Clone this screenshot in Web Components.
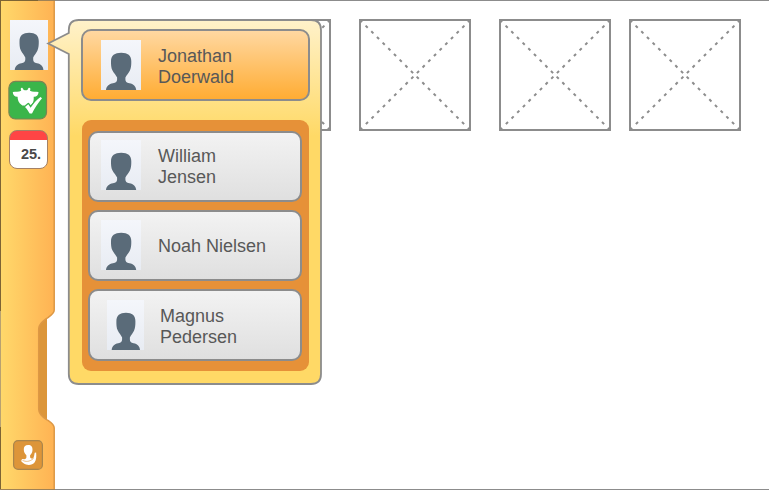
<!DOCTYPE html>
<html lang="en">
<head>
<meta charset="utf-8">
<title>Profile selector</title>
<style>
html,body{margin:0;height:100%;overflow:hidden;background:#fff;font-family:"Liberation Sans",Arial,sans-serif}
</style>
</head>
<body>
<week-app></week-app>
<script>
function define(name, html) {
  const t = document.createElement('template');
  t.innerHTML = html;
  customElements.define(name, class extends HTMLElement {
    constructor() {
      super();
      this.attachShadow({ mode: 'open' }).append(t.content.cloneNode(true));
    }
  });
}

define('person-portrait', `
<style>
:host{display:block;width:40px;height:50px;flex:none;background:linear-gradient(#f4f6fb,#e8ecf3)}
svg{display:block;width:100%;height:100%}
</style>
<svg viewBox="0 0 40 50" preserveAspectRatio="none"><path fill="#5a6b79" d="M5 50C5.200 46.500 8 43.800 12 43.200C15 42.700 16.100 41.500 16.100 39.500V37.500C14.800 34.800 13 33.500 11.500 30.500C10 28 10 24.500 10 21.300C10 15.500 13.700 12.800 20.200 12.800C26.800 12.800 30.300 15.600 30.300 21.300C30.300 25 30.200 28 28.800 30.800C27.500 33.500 25.600 34.900 24.400 37.500V39.500C24.400 41.500 25.400 42.700 28.400 43.200C32.400 43.800 35 46.300 35.200 50Z"/></svg>`);

define('person-card', `
<style>
:host{box-sizing:border-box;display:flex;height:71px;border:2px solid #8c8c8c;border-radius:10px;
 background:linear-gradient(#f3f3f3,#dfdfdf);background-origin:border-box;color:#585858;font-size:18px;line-height:21px;padding:7px 0 0 11px}
:host([selected]){background-image:linear-gradient(#ffd9a4,#ffab30);height:72px;padding:9px 0 0 18px}
:host([single]){padding-top:8px}
:host([narrow]){height:72px;padding:9px 0 0 16.5px}
:host([narrow]) person-portrait{width:37.500px}
.name{width:115px;margin-left:17px;padding-top:6px}
:host([single]) .name{padding-top:16px}
:host([narrow]) .name{margin-left:16px}
</style>
<person-portrait></person-portrait><div class="name"><slot></slot></div>`);

define('person-list', `
<style>
:host{box-sizing:border-box;display:flex;flex-direction:column;gap:8px;width:227px;height:251px;margin:19px 0 0 1px;padding:11px 7px 0 6px;border-radius:9px;background:#e69138}
</style><slot></slot>`);

define('profile-popover', `
<style>
:host{position:absolute;left:48px;top:19px;display:block;box-sizing:border-box;width:274px;height:366px}
.shape{position:absolute;inset:0;overflow:visible}
.body{position:relative;padding:10px 12px 0 33px;width:229px}
::slotted(person-card){width:229px}
</style>
<svg class="shape" width="274" height="366" viewBox="0 0 274 366">
<defs><linearGradient id="g" gradientUnits="userSpaceOnUse" x1="0" y1="0" x2="0" y2="366"><stop offset="0" stop-color="#fff2cb"/><stop offset=".32" stop-color="#ffd966"/></linearGradient></defs>
<path d="M30.800 1H263Q273 1 273 11V355Q273 365 263 365H30.800Q20.800 365 20.800 355V35L.2 24.500L20.800 14V11Q20.800 1 30.800 1Z" fill="url(#g)" stroke="#8c8c8c" stroke-width="1.8"/></svg>
<div class="body"><slot></slot></div>`);

define('crossed-box', `
<style>
:host{display:block;width:112px;height:112px;flex:none}svg{display:block}
</style>
<svg width="112" height="112" viewBox="0 0 112 112" fill="none" stroke="#8c8c8c" stroke-width="2">
<rect x="1" y="1" width="110" height="110"/>
<path d="M2 3.2L3.2 2M108.800 2L110 3.200M2 108.800L3.200 110M108.800 110L110 108.800" stroke-width="1.500"/>
<path d="M6.600 6.600L105.600 105.600M105.400 6.600L6.400 105.600" stroke-dasharray="3 5.020"/></svg>`);

define('box-row', `
<style>
:host{display:flex;gap:28px;padding:19px 0 0 164px}
::slotted(:last-child){margin-left:-10px}
</style><slot></slot>`);

define('done-icon', `
<style>:host{display:block;width:40px;height:40px}svg{display:block}</style>
<svg width="40" height="40" viewBox="0 0 40 40"><rect x=".9" y="1.400" width="37.600" height="37.600" rx="6.500" fill="#3bb54a" stroke="#798552" stroke-width="1.200"/>
<path fill="#fff" d="M13.200 10.700C12 8.300 13.500 7.300 14.600 8.200C15.400 8.900 15.200 9.800 16 10.100C17 10.400 18.500 10.400 19.200 10.100C20 9.800 19.600 8.900 20.400 8.200C21.500 7.300 23.200 8.300 22 10.700C24.500 12 27.500 11.500 30.500 11.900C30.500 15 28.500 17 25.700 16.800C25.800 20 25.700 23 23.500 24.600C21 26.200 15.500 26.300 13.700 25C10.500 23 9.600 20 9.600 16.800C6.800 17 4.800 15 4.800 11.900C7.500 11.500 10.700 12 13.200 10.700Z"/>
<path fill="#fff" stroke="#3bb54a" stroke-width="2.600" paint-order="stroke" stroke-linejoin="round" d="M17 27L20.300 24.200L22.600 27.700C25.500 23.500 28.600 19.900 32.500 17L34 18.200C29.800 23.200 26.700 28.100 24 33.500L21.700 33.600C20.500 31.300 19 29 17 27Z"/></svg>`);

define('date-icon', `
<style>
:host{box-sizing:border-box;display:block;width:39px;height:39px;border:1px solid #a58165;border-radius:8px;background:linear-gradient(#ff4545 9px,#fff 9px);
 color:#494949;font:bold 14.500px/20px "Liberation Sans",Arial,sans-serif;text-align:center;padding:13px 0 0 5px}
</style><slot></slot>`);

define('user-icon', `
<style>:host{display:block;width:30px;height:30px}svg{display:block}</style>
<svg width="30" height="30" viewBox="0 0 30 30"><rect x=".6" y=".6" width="28.800" height="28.800" rx="4.500" fill="#dd9539" stroke="#a9854c" stroke-width="1.200"/>
<path fill="#fff" d="M15.200 4.900C18.400 4.900 19.500 6.800 19.500 9.200C19.500 12 18.700 13.600 17.100 15.300V17.200C17.500 18.600 19 18.700 20.300 18.300C21.200 16.500 21.300 14.500 21.700 12.800L23.100 12.600C23.500 16.500 23.400 19.800 21.700 22.200C19.800 24.800 16.600 25.300 13 24.600C10.500 23.900 9 22.200 7.700 20.600L9.300 20.200L8.500 19.100C10 19 11 19.400 12 19C13 18.600 13.400 18 13.400 17.200V15.300C11.800 13.600 10.800 12 10.800 9.200C10.800 6.800 12 4.900 15.200 4.900Z"/>
<path d="M9.500 20.200C12.500 22 16.500 22 20.500 18.500" fill="none" stroke="#dd9539" stroke-width=".6"/></svg>`);

define('side-bar', `
<style>
:host{position:relative;box-sizing:border-box;display:flex;flex-direction:column;width:55px;height:490px;flex:none;padding:20px 0 0}
.bg{position:absolute;inset:0}
::slotted(*){position:relative}
::slotted(person-portrait){width:38px;margin-left:10px}
::slotted(done-icon){margin:10px 0 0 8px}
::slotted(date-icon){margin:10px 0 0 9px}
::slotted(user-icon){margin:auto 0 20px 13px}
</style>
<svg class="bg" width="55" height="490" viewBox="0 0 55 490">
<defs><linearGradient id="s" gradientUnits="userSpaceOnUse" x1="0" y1="0" x2="55" y2="0"><stop stop-color="#ffd96b"/><stop offset="1" stop-color="#ffb253"/></linearGradient></defs>
<path fill="#dc963a" d="M36 318H47V419H36Z"/>
<path fill="url(#s)" d="M0 0H54.300V310C54.300 314 50 316 46.500 318.500C42 322 38.700 324.500 38.700 329V409C38.700 414 42.500 417 46.500 419.500C50 422 54.300 424 54.300 428V490H0Z"/>
<path fill="none" stroke="#dd9845" stroke-width="1.500" d="M54.200 0V310C54.200 314 50 316 46.500 318.500C42 322 38.700 324.500 38.700 329V409C38.700 414 42.500 417 46.500 419.500C50 422 54.200 424 54.200 428V490"/>
<path fill="#7d6434" d="M0 0H38V1H0ZM0 0H1V311H0ZM0 427H1V490H0Z"/>
<path fill="#b8a171" d="M0 311H1V427H0Z"/><path fill="#a08256" d="M38 0H55V1H38ZM0 489H55V490H0Z"/>
</svg><slot></slot>`);

define('week-app', `
<style>
:host{position:relative;display:flex;width:769px;height:490px;overflow:hidden}
main{flex:1;min-width:0;box-sizing:border-box;box-shadow:inset 0 1px #8c8c8c,inset 0 -1px #8c8c8c}
</style>
<side-bar><person-portrait></person-portrait><done-icon></done-icon><date-icon>25.</date-icon><user-icon></user-icon></side-bar>
<main><box-row><crossed-box></crossed-box><crossed-box></crossed-box><crossed-box></crossed-box><crossed-box></crossed-box></box-row></main>
<profile-popover>
<person-card selected>Jonathan Doerwald</person-card>
<person-list><person-card>William<br>Jensen</person-card><person-card single>Noah Nielsen</person-card><person-card narrow>Magnus Pedersen</person-card></person-list>
</profile-popover>`);
</script>
</body>
</html>
